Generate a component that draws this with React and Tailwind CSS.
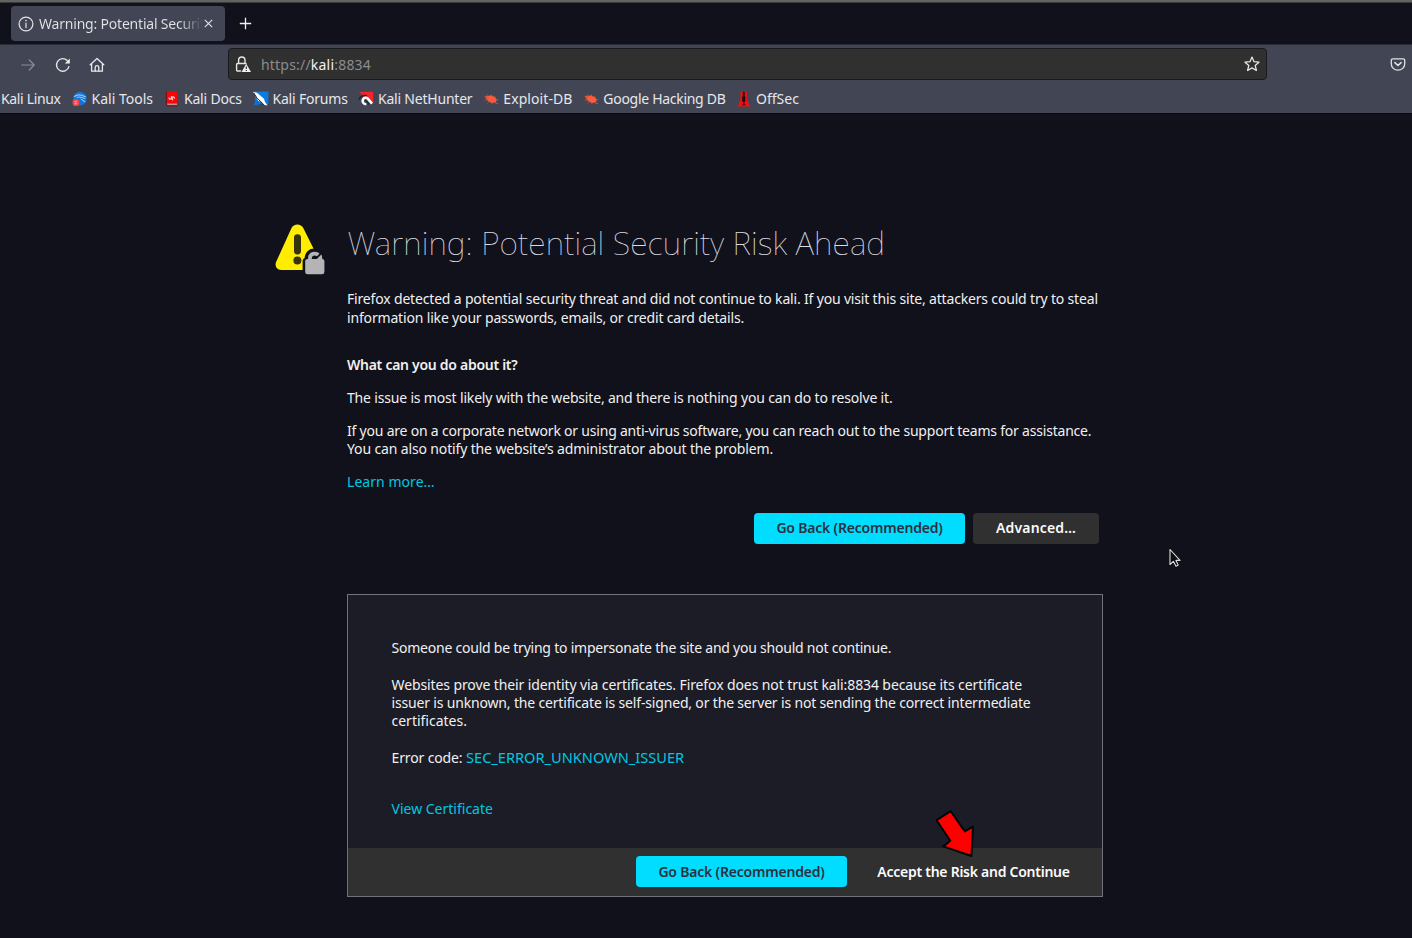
const ICON = "shrink-0 block";

function InfoIcon() {
  return (
    <svg className={ICON} width="16" height="16" viewBox="0 0 16 16" fill="none" stroke="#e6e6e8" strokeWidth="1.2">
      <circle cx="8" cy="8" r="6.9" />
      <path d="M8 7v4.6" strokeLinecap="round" />
      <circle cx="8" cy="4.6" r="0.8" fill="#e6e6e8" stroke="none" />
    </svg>
  );
}

function ForwardIcon() {
  return (
    <svg className={ICON} width="16" height="16" viewBox="0 0 16 16" fill="none" stroke="#8c8c90" strokeWidth="1.2" strokeLinecap="round" strokeLinejoin="round">
      <path d="M1.7 8H14.2M9.3 3l4.9 5-4.9 5" />
    </svg>
  );
}

function ReloadIcon() {
  return (
    <svg className={ICON} width="16" height="16" viewBox="0 0 16 16" fill="none" stroke="#e6e6e6" strokeWidth="1.4" strokeLinecap="round">
      <path d="M13.9 9.6A6.3 6.3 0 1 1 12.2 3.4" />
      <path d="M14.8 1.4v5H9.8z" fill="#eeeeee" stroke="none" />
    </svg>
  );
}

function HomeIcon() {
  return (
    <svg className={ICON} width="16" height="16" viewBox="0 0 16 16" fill="none" stroke="#e9e9ea" strokeWidth="1.3" strokeLinecap="round" strokeLinejoin="round">
      <path d="M1.2 7.7 8 1.4l6.8 6.3M2.6 6.7v7.5h10.8V6.7" />
      <path d="M6.2 14v-3.5a1.8 1.8 0 0 1 3.6 0V14" />
    </svg>
  );
}

function LockWarningIcon() {
  return (
    <svg className={ICON} width="16" height="17" viewBox="0 0 16 17" fill="none" stroke="#e6e6e6" strokeWidth="1.4">
      <path d="M5.6 15H2.6a1 1 0 0 1-1-1V8.5a1 1 0 0 1 1-1h8.4M3.6 7.2V4.2a3.2 3.2 0 0 1 6.4 0v3" strokeLinecap="round" />
      <path d="M11.2 7.8 16 16H6.6z" fill="#eeeeee" stroke="none" />
      <path d="M11.3 10.4v2.5M11.3 14v1" stroke="#303030" strokeWidth="1.2" />
    </svg>
  );
}

function StarIcon() {
  return (
    <svg className={ICON} width="16" height="16" viewBox="0 0 16 16" fill="none" stroke="#e6e6e6" strokeWidth="1.25" strokeLinejoin="round">
      <path d="M8 1.1 10 5.7l5 .5-3.8 3.3 1.2 5L8 11.9l-4.4 2.6 1.2-5L1 6.2l5-.5z" />
    </svg>
  );
}

function PocketIcon() {
  return (
    <svg className={ICON} width="16" height="16" viewBox="0 0 16 16" fill="none" stroke="#e2e2e4" strokeWidth="1.3" strokeLinecap="round" strokeLinejoin="round">
      <path d="M2.8 1.8h10.4a1.5 1.5 0 0 1 1.5 1.5V7a6.7 6.2 0 0 1-13.4 0V3.3a1.5 1.5 0 0 1 1.5-1.5z" />
      <path d="M4.9 5.6 8 8.5l3.1-2.9" strokeWidth="1.5" />
    </svg>
  );
}

function ToolsIcon() {
  return (
    <svg className={ICON} width="16" height="16" viewBox="0 0 16 16">
      <circle cx="8" cy="7.6" r="6.8" fill="#1473d4" />
      <path d="M2 5.8C5 3 9 3.4 13.8 6M4.5 6.6c3.2-1.4 6-.4 8.6 1.3M8.5 7.6c2 1.2 3 2.6 4.8 3.2" fill="none" stroke="#8cc7fa" strokeWidth="1.1" />
      <rect x=".6" y="8.3" width="6.6" height="6.6" rx="1.8" fill="#f0454a" />
      <path d="M2.4 10.4h3M2.4 12.6h3M3.9 9.8v4" stroke="#ff9c9a" strokeWidth=".8" />
    </svg>
  );
}

function DocsIcon() {
  return (
    <svg className={ICON} width="16" height="16" viewBox="0 0 16 16">
      <path d="M3.2.4h9.8v12.4H2.6V1.6c0-.7.1-1.2.6-1.2z" fill="#fa0505" />
      <path d="M3 12.6h10v1.8H4A1.2 1.2 0 0 1 3 12.6z" fill="#b98e94" />
      <path d="M2.4 1v11.8c0 1.2.6 2 1.4 2H13" fill="none" stroke="#78131b" strokeWidth="1.2" />
      <path d="M5 6.4c.1 2.4 1.8 2.2 2.7.7s2-1.7 3 .5M7.2 5.2l1.6 4" fill="none" stroke="#ffd9d9" strokeWidth="1.2" />
    </svg>
  );
}

function ForumsIcon() {
  return (
    <svg className={ICON} width="16" height="16" viewBox="0 0 16 16">
      <path d="M2 .6h13.4v12.6L3 12.8 2 8z" fill="#0b7be0" />
      <path d="M0 .8C2 1.5 3.6 1.6 5 2.6l6 5.2 1 3.2 2.6 3.6-3-.6-3.2-3.2-3.2-.8L2.6 5z" fill="#fff" />
      <path d="m.8 2 3.4 5.4 3.6 3.2 2.6 3.6" fill="none" stroke="#1b2632" strokeWidth="1" />
      <path d="M.8 14c.4-2.8 1.4-4 3.2-4.6l2.6 3.2C5 14.2 3.3 14.8.8 14z" fill="#0873d2" />
    </svg>
  );
}

function NetHunterIcon() {
  return (
    <svg className={ICON} width="16" height="16" viewBox="0 0 16 16">
      <path d="M1 .8h14.2v12.4L8 8.6z" fill="#f0262b" />
      <path d="M14 12.6 9.6 7.4a3 3 0 0 0-4.4.6C3.8 10.4 5 13.2 8.3 13.2" fill="none" stroke="#fff" strokeWidth="2.5" />
      <path d="M.8 8.6C2.4 5.4 4.8 3.8 9 4.6" fill="none" stroke="#222633" strokeWidth="1.4" />
      <path d="m7.6 9.2 3.9 4.3" stroke="#272b38" strokeWidth="1.3" />
    </svg>
  );
}

function BugIcon() {
  return (
    <svg className={ICON} width="16" height="16" viewBox="-0.8 0 16 16">
      <path d="M.6 5.1 4 6M3 3.3 5.6 6M7.6 3.5l.3 2.7M1 9.2l3.3-.7M3.6 12l2.5-2.2M7.8 13l1-2.4M10.2 4.8 12 6.8M11.4 12l2.8.5M11.4 8.8l3-.4" fill="none" stroke="#b45a3d" strokeWidth="1" />
      <ellipse cx="7.8" cy="8.2" rx="5.2" ry="3.3" transform="rotate(22 7.8 8.2)" fill="#fb5b40" />
      <circle cx="3.2" cy="6.3" r="1.5" fill="#e9572f" />
    </svg>
  );
}

function OffSecIcon() {
  return (
    <svg className={ICON} width="16" height="16" viewBox="-0.6 0 16 16">
      <path d="M3.9.2h6.4v8.6l3.5 6.6H.8l3.1-6.6z" fill="#f20d12" />
      <path d="M6.2.8h1.9v4l.6 1.4v3.6l-1.5 2.4-1.7-2.4V6.2l.7-1.4z" fill="#26090d" />
      <path d="m7.2 10.8 2 3.4H5.2z" fill="#65090e" />
    </svg>
  );
}

function WarningIcon() {
  return (
    <svg className={ICON} width="50" height="51" viewBox="0 0 50 51">
      <path d="M16.4 4.2c2.5-4.9 9.5-4.9 12 0L43 33.6V46H6.2c-4.8 0-6.8-4.6-4.9-8.4z" fill="#ffed00" />
      <rect x="19" y="10.2" width="7" height="20.2" rx="3.4" fill="#39330c" />
      <circle cx="22.4" cy="36.4" r="4" fill="#39330c" />
      <path d="M27.6 50.4V37.2c0-1.6.9-2.6 2-3.1.4-5.3 4-9.6 9.7-9.6 4.2 0 8.4 2.8 9.9 7v18.9z" fill="#11111b" />
      <rect x="30.2" y="35" width="19.2" height="15.2" rx="2.3" fill="#b4b4b7" />
      <path d="M33.1 37v-3c0-4 2.8-6.3 6.6-6.3 2 0 3.6.7 4.8 1.8l-2.4 2.7c-2.8-1.5-5.3-.5-5.3 2.4V37zM41.6 35.2l4.7-4.8c.8 1.2 1 2.9 1 5.6h-5.7z" fill="#b4b4b7" />
    </svg>
  );
}

const bookmarks = [
  { label: "Kali Tools", Icon: ToolsIcon, box: "w-[92.5px]", text: "tracking-normal" },
  { label: "Kali Docs", Icon: DocsIcon, box: "w-[88.5px]", text: "tracking-[-0.2px]" },
  { label: "Kali Forums", Icon: ForumsIcon, box: "w-[105.5px]", text: "tracking-[-0.2px]" },
  { label: "Kali NetHunter", Icon: NetHunterIcon, box: "w-[125.3px]", text: "tracking-[-0.21px]" },
  { label: "Exploit-DB", Icon: BugIcon, box: "w-[100px]", text: "tracking-[0.08px]" },
  { label: "Google Hacking DB", Icon: BugIcon, box: "w-[152.7px]", text: "tracking-[-0.29px]" },
  { label: "OffSec", Icon: OffSecIcon, box: "w-[70px]", text: "tracking-normal" },
];

function Browser() {
  return (
    <header className="text-[14px]">
      <div className="h-[3px] border-b border-[#393b3d] bg-[#606460]" />
      <div className="flex h-[42px] items-start border-b border-[#292b38] bg-[#11111b] pt-[3px] pl-[11px]">
        <div className="flex h-[35px] w-[213.5px] items-center rounded bg-[#424554] pr-[10px] pl-[7px] text-[#e4e4e7]">
          <InfoIcon />
          <div className="ml-[5px] w-[164px] overflow-hidden bg-linear-to-r from-[#e4e4e7] from-85% to-transparent bg-clip-text pt-px tracking-[-0.2px] whitespace-nowrap text-transparent">
            Warning: Potential Security Risk
          </div>
          <svg className="ml-px shrink-0" width="9" height="9" viewBox="0 0 9 9" stroke="#e0e0e2" strokeWidth="1.2">
            <path d="m.8.8 7.4 7.4M8.2.8.8 8.2" />
          </svg>
        </div>
        <svg className="mt-[11px] ml-[14.5px]" width="13" height="13" viewBox="0 0 13 13" stroke="#f0f0f0" strokeWidth="1.3">
          <path d="M6.5.8v11.4M.8 6.5h11.4" />
        </svg>
      </div>
      <div className="h-[69px] border-b border-[#090a10] bg-[#424554]">
        <div className="flex h-[38px] items-center pl-5">
          <div className="pt-px"><ForwardIcon /></div>
          <div className="ml-[19px] pt-px"><ReloadIcon /></div>
          <div className="ml-[18px] pt-px"><HomeIcon /></div>
          <div className="ml-[123px] flex h-[32px] w-[1039px] items-center rounded border border-[#191a20] bg-[#303030] pr-[6px] pl-[6px]">
            <LockWarningIcon />
            <div className="ml-[10px] flex-1 pt-[2px] tracking-[0.2px] text-[#8c8c8e]">
              https://<span className="text-[#f2f2f2]">kali</span>:8834
            </div>
            <StarIcon />
          </div>
          <div className="ml-[123px] pt-px"><PocketIcon /></div>
        </div>
        <nav className="flex h-[31px] items-center pt-px text-[#e7e7ea]">
          <span className="w-[71.5px] pl-px tracking-[-0.34px] whitespace-nowrap">Kali Linux</span>
          {bookmarks.map(({ label, Icon, box, text }) => (
            <a key={label} className={`flex shrink-0 items-center gap-[4px] whitespace-nowrap ${box} ${text}`}>
              <Icon />
              {label}
            </a>
          ))}
        </nav>
      </div>
    </header>
  );
}

const primary = "h-[31px] w-[211px] rounded bg-[#00ddff] pt-px font-semibold tracking-[-0.2px] text-[#2b3040]";

export default function App() {
  return (
    <div className="relative h-[938px] w-[1412px] overflow-hidden bg-[#11111b] font-['Noto_Sans',sans-serif] text-[14px] leading-[18.4px] text-[#f0f0f1]">
      <Browser />
      <main className="flex pt-[110px] pl-[275px]">
        <div className="w-[72px] shrink-0"><WarningIcon /></div>
        <div className="w-[756px] whitespace-nowrap">
          <h1 className="h-[40px] pl-[0.5px] text-[32px] leading-[37px] font-thin tracking-[0.09px] text-[#dcdce2]">Warning: Potential Security Risk Ahead</h1>
          <p className="mt-[26.3px]">
            <span className="block tracking-[-0.173px]">Firefox detected a potential security threat and did not continue to kali. If you visit this site, attackers could try to steal</span>
            <span className="block tracking-[-0.167px]">information like your passwords, emails, or credit card details.</span>
          </p>
          <h2 className="mt-[28.8px] font-semibold tracking-[-0.28px]">What can you do about it?</h2>
          <p className="mt-[14.6px] tracking-[-0.175px]">The issue is most likely with the website, and there is nothing you can do to resolve it.</p>
          <p className="mt-[14.6px]">
            <span className="block tracking-[-0.21px]">If you are on a corporate network or using anti-virus software, you can reach out to the support teams for assistance.</span>
            <span className="block tracking-[-0.141px]">You can also notify the website’s administrator about the problem.</span>
          </p>
          <a className="mt-[14.6px] block tracking-[0.05px] text-[#00c8e0]">Learn more…</a>
          <div className="mt-[20.9px] flex justify-end gap-2 pr-[4px]">
            <button className={primary}>Go Back (Recommended)</button>
            <button className="h-[31px] w-[126px] rounded bg-[#303030] pt-px font-semibold tracking-[0.15px] text-[#fbfbfe]">Advanced…</button>
          </div>
          <section className="mt-[50px] h-[303px] border border-[#72727c] bg-[#1c1c26]">
            <div className="h-[253px] pt-[44px] pl-[43.5px]">
              <p className="tracking-[-0.228px]">Someone could be trying to impersonate the site and you should not continue.</p>
              <p className="mt-[18.6px]">
                <span className="block tracking-[-0.105px]">Websites prove their identity via certificates. Firefox does not trust kali:8834 because its certificate</span>
                <span className="block tracking-[-0.169px]">issuer is unknown, the certificate is self-signed, or the server is not sending the correct intermediate</span>
                <span className="block">certificates.</span>
              </p>
              <p className="mt-[17.8px] h-[18.4px] tracking-[-0.13px]">
                Error code: <a className="text-[14.6px] leading-none tracking-normal text-[#00c8e0]">SEC_ERROR_UNKNOWN_ISSUER</a>
              </p>
              <a className="mt-[33px] block text-[#00c8e0]">View Certificate</a>
            </div>
            <footer className="flex h-[48px] items-center bg-[#303030] pl-[288px]">
              <button className={primary}>Go Back (Recommended)</button>
              <button className="ml-[7px] h-[31px] w-[239px] pt-px font-semibold tracking-[-0.26px] text-[#fbfbfe]">Accept the Risk and Continue</button>
            </footer>
          </section>
        </div>
      </main>
      <svg className="absolute top-[809px] left-[934px]" width="42" height="50" viewBox="0 0 42 50">
        <path d="M2.6 11.2 16.7 2.2 30.8 22.4 39 17.6 37.4 47 9.3 37.4 16.3 31.8z" fill="#ff0000" stroke="#050505" strokeWidth="2" strokeLinejoin="round" />
      </svg>
      <svg className="absolute top-[548px] left-[1168px]" width="14" height="20" viewBox="0 0 14 20">
        <path d="M2 1.5v15l3.4-3.2 2.6 5 2.2-1.2-2.3-4.7H12z" fill="#0b0b10" stroke="#dedede" strokeWidth="1.1" strokeLinejoin="round" />
      </svg>
    </div>
  );
}
